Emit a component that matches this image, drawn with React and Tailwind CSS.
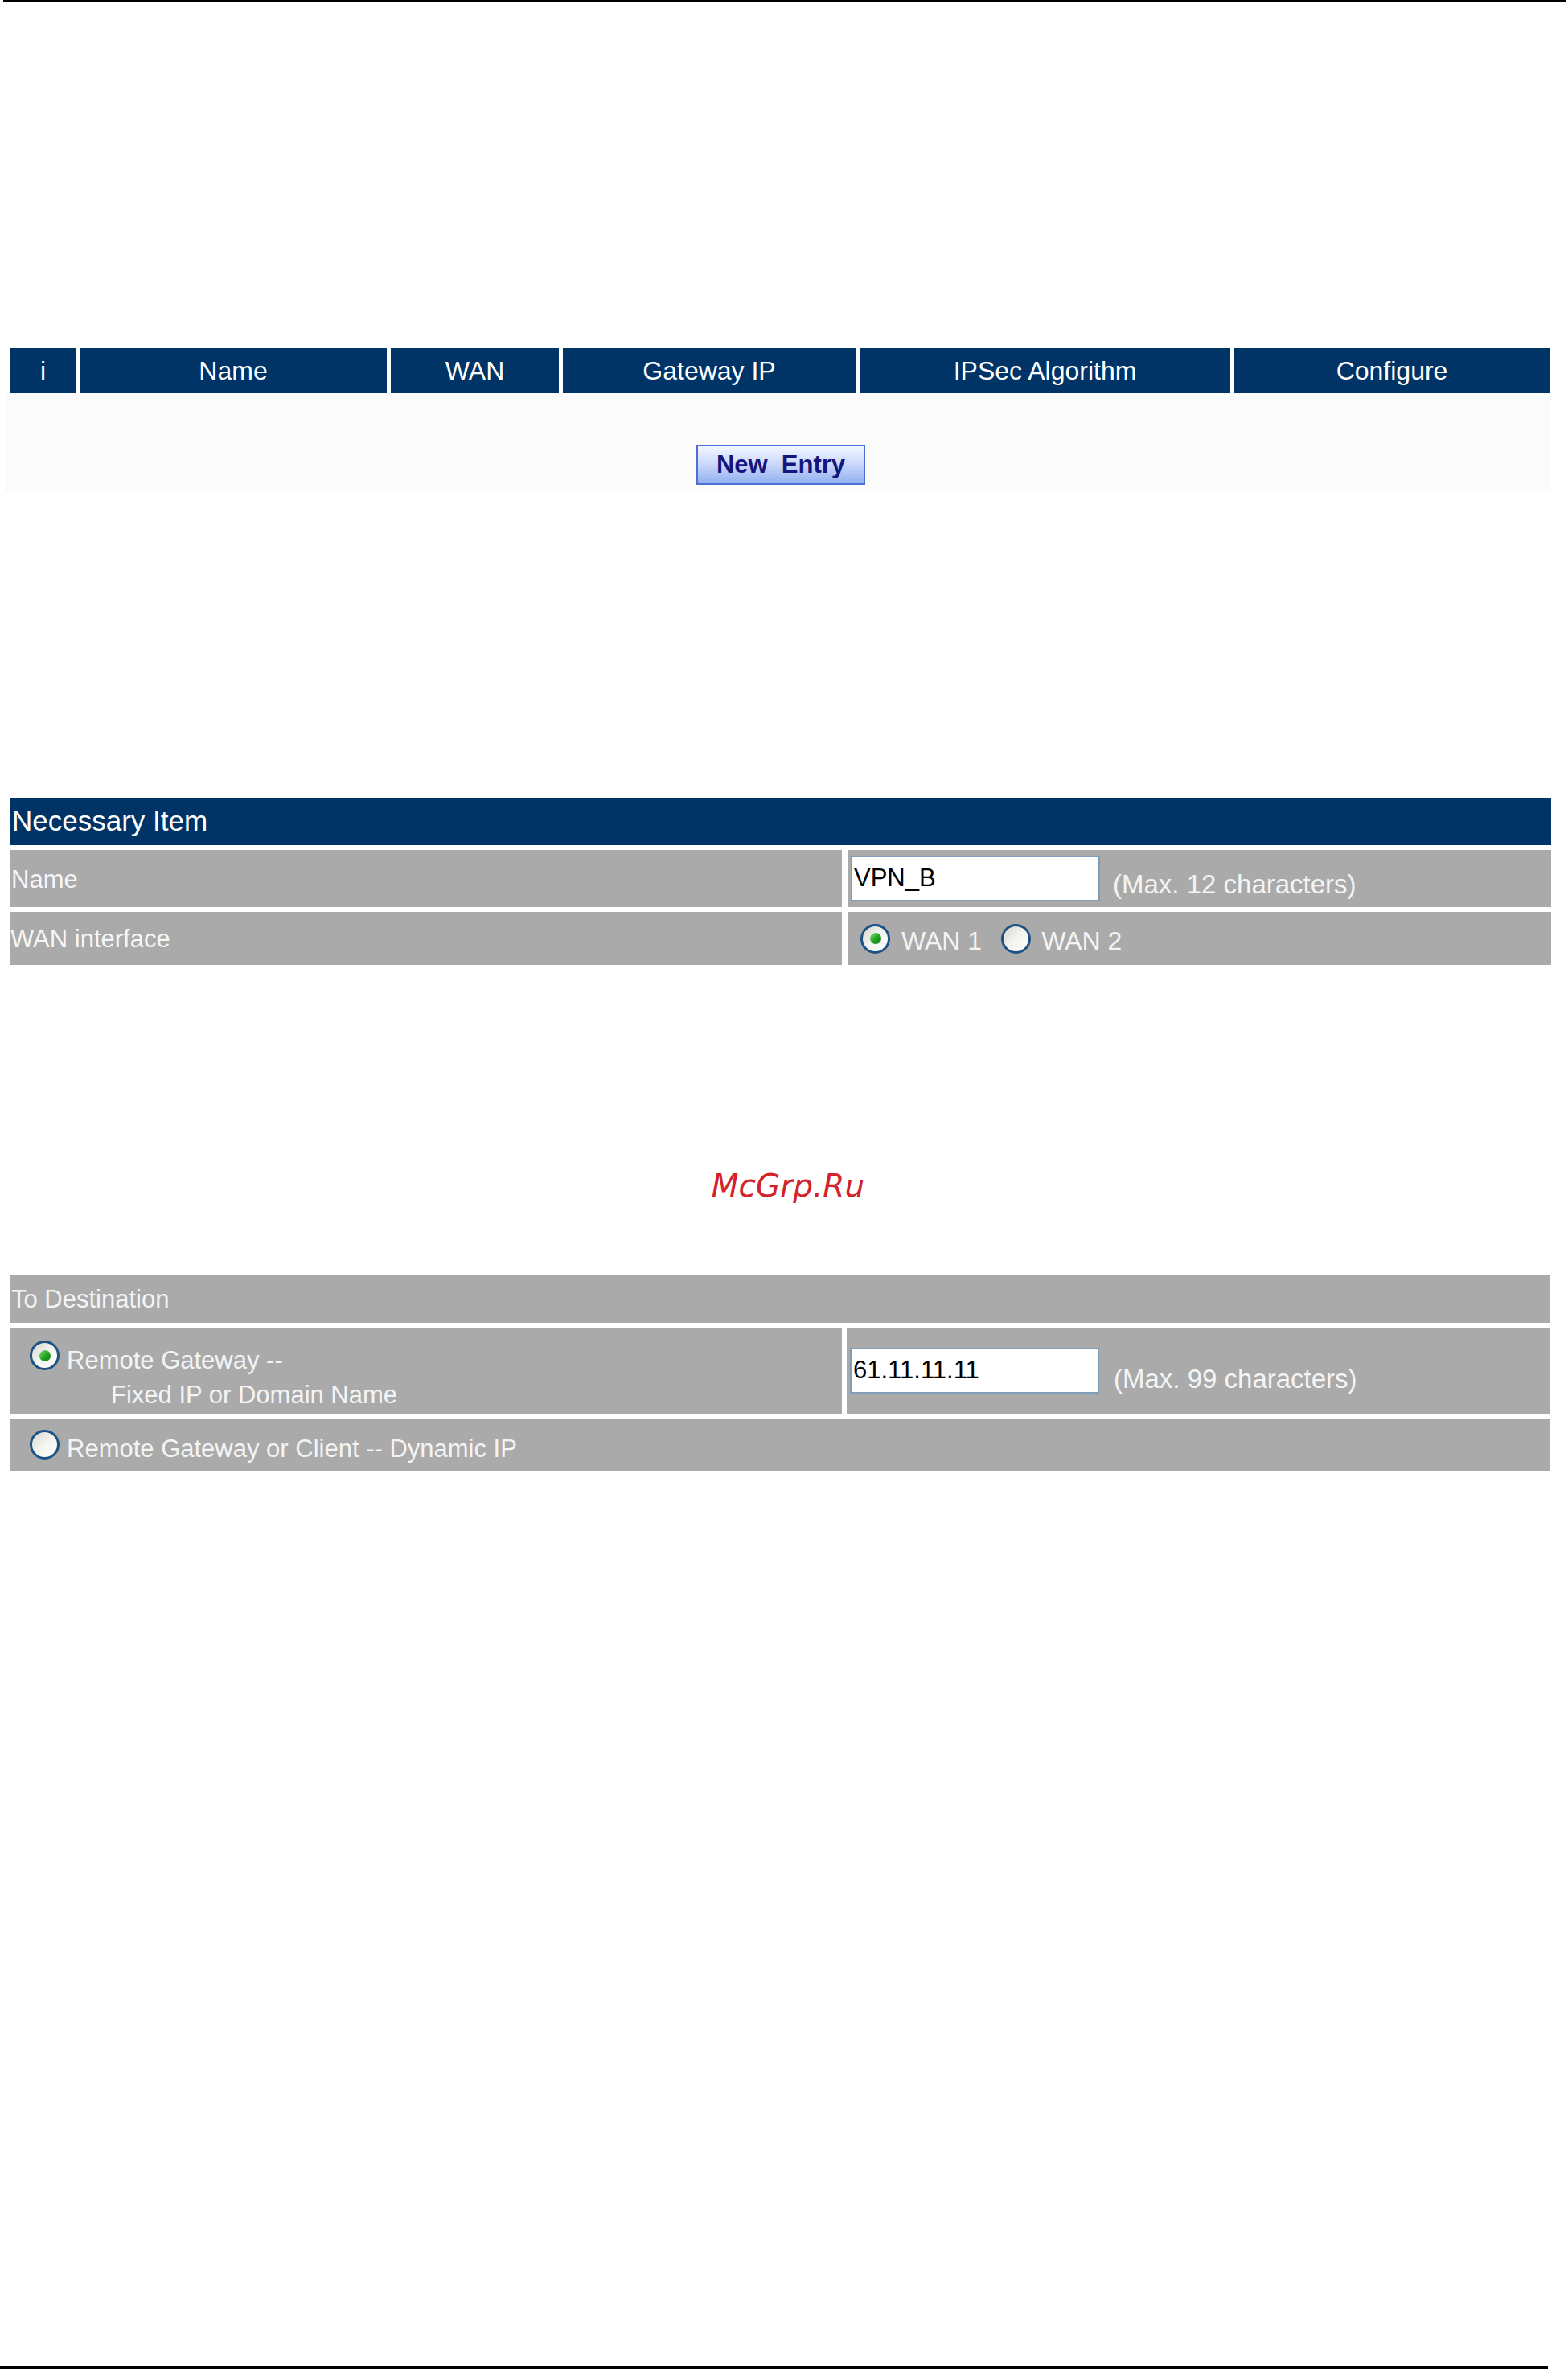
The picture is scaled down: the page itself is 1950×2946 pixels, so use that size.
import React from "react";

function Radio({ checked }) {
  return (
    <span className="relative inline-flex h-[37px] w-[37px] shrink-0 items-center justify-center rounded-full border-[3px] border-[#1d5384] bg-gradient-to-br from-[#d8d8d0] via-[#f4f4f0] to-[#ffffff]">
      {checked && (
        <span className="h-[14px] w-[14px] rounded-full bg-gradient-to-br from-[#7ee07e] via-[#22a622] to-[#167a16]" />
      )}
    </span>
  );
}

function TextBox({ value }) {
  return (
    <div className="flex h-[57px] w-[310px] shrink-0 items-center border-2 border-[#7f9db9] bg-white pl-[2px] text-[31px] text-black">
      {value}
    </div>
  );
}

const columns = [
  { label: "i", w: "w-[81px]" },
  { label: "Name", w: "w-[382px]" },
  { label: "WAN", w: "w-[209px]" },
  { label: "Gateway IP", w: "w-[364px]" },
  { label: "IPSec Algorithm", w: "w-[461px]" },
  { label: "Configure", w: "w-[392px]" },
];

export default function App() {
  return (
    <div className="flex h-[2946px] w-[1950px] flex-col overflow-hidden bg-white font-['Liberation_Sans',Arial,sans-serif]">
      {/* page rule */}
      <div className="ml-[4px] h-[3px] w-[1944px] bg-black" />

      {/* tunnel list */}
      <div className="ml-[13px] mt-[430px] w-[1914px]">
        <div className="flex h-[56px] gap-[5px]">
          {columns.map((c) => (
            <div
              key={c.label}
              className={`${c.w} flex items-center justify-center bg-[#003366] text-[32px] text-white`}
            >
              {c.label}
            </div>
          ))}
        </div>
        <div className="-ml-[7px] flex h-[123px] w-[1923px] justify-center bg-[#fbfbfb] pt-[64px]">
          <button className="ml-[7px] flex h-[50px] w-[210px] items-center justify-center whitespace-pre border-2 border-[#4e6ed6] bg-gradient-to-b from-[#f2f6ff] via-[#c8d7fb] to-[#93b0ee] text-[31px] font-bold text-[#15157e]">
            {"New  Entry"}
          </button>
        </div>
      </div>

      {/* necessary item */}
      <div className="ml-[13px] mt-[380px] flex w-[1916px] flex-col gap-[6px]">
        <div className="flex h-[59px] items-center bg-[#003366] pl-[2px] text-[35px] text-white">
          Necessary Item
        </div>
        <div className="flex h-[71px] gap-[7px]">
          <div className="flex w-[1034px] items-center bg-[#aaaaaa] pl-[1px] pt-[4px] text-[31px] text-[#f6f6f6]">
            Name
          </div>
          <div className="flex flex-1 items-center bg-[#aaaaaa] pl-[4px]">
            <TextBox value="VPN_B" />
            <span className="ml-[16px] mt-[14px] text-[33px] text-[#f4f4f4]">(Max. 12 characters)</span>
          </div>
        </div>
        <div className="flex h-[66px] gap-[7px]">
          <div className="flex w-[1034px] items-center bg-[#aaaaaa] pt-[2px] text-[31px] text-[#f6f6f6]">
            WAN interface
          </div>
          <div className="flex flex-1 items-center bg-[#aaaaaa] pl-[16px] text-[32px] text-[#f4f4f4]">
            <Radio checked />
            <span className="ml-[14px] mt-[6px]">WAN 1</span>
            <span className="ml-[24px] flex items-center">
              <Radio />
            </span>
            <span className="ml-[13px] mt-[6px]">WAN 2</span>
          </div>
        </div>
      </div>

      {/* site mark */}
      <div className="mt-[255px] h-[39px] pl-[10px] text-center text-[39px] italic leading-[39px] text-[#d2232a] font-['DejaVu_Sans',sans-serif]">
        McGrp.Ru
      </div>

      {/* destination */}
      <div className="ml-[13px] mt-[91px] flex w-[1914px] flex-col gap-[6px] text-[31px] text-[#f4f4f4]">
        <div className="flex h-[60px] items-center bg-[#aaaaaa] pl-[1px] pt-[2px]">To Destination</div>
        <div className="flex h-[107px] gap-[6px]">
          <div className="flex w-[1034px] items-start bg-[#aaaaaa] pl-[24px] pt-[16px]">
            <Radio checked />
            <div className="ml-[9px] mt-[3px] leading-[43px]">
              <div>Remote Gateway --</div>
              <div className="pl-[55px]">Fixed IP or Domain Name</div>
            </div>
          </div>
          <div className="flex flex-1 items-center bg-[#aaaaaa] pl-[4px]">
            <TextBox value="61.11.11.11" />
            <span className="ml-[18px] mt-[20px] text-[33px]">(Max. 99 characters)</span>
          </div>
        </div>
        <div className="flex h-[65px] items-center bg-[#aaaaaa] pl-[24px]">
          <Radio />
          <span className="ml-[9px] mt-[12px]">Remote Gateway or Client -- Dynamic IP</span>
        </div>
      </div>

      {/* page rule */}
      <div className="mt-[1113px] h-[4px] w-[1925px] bg-black" />
    </div>
  );
}
